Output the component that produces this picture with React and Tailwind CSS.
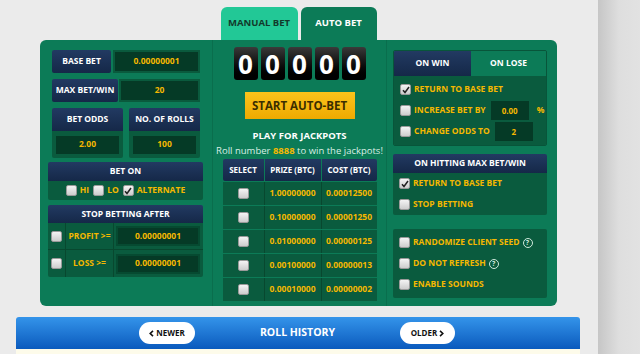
import React from 'react';

const font = { fontFamily: '"Open Sans", "Liberation Sans", sans-serif' };

const Check = ({ checked }) => (
  <span className="inline-flex items-center justify-center w-[11px] h-[11px] rounded-[2px] bg-gradient-to-b from-[#f4f4f4] to-[#cdcdcd] border border-[#9a9a9a] shrink-0">
    {checked && (
      <svg width="8" height="8" viewBox="0 0 8 8">
        <path d="M1 4.2 L3 6.5 L7 1" stroke="#222" strokeWidth="1.5" fill="none" />
      </svg>
    )}
  </span>
);

const Help = () => (
  <span className="inline-flex items-center justify-center w-[10px] h-[10px] rounded-full border border-[#cfe9dc] text-[7px] font-bold text-[#cfe9dc] leading-none ml-[3px]">?</span>
);

const Chevron = ({ dir }) => (
  <svg width="5" height="7" viewBox="0 0 5 7">
    <path d={dir === 'left' ? 'M4 0.8 L1.2 3.5 L4 6.2' : 'M1 0.8 L3.8 3.5 L1 6.2'} stroke="#111" strokeWidth="1.6" fill="none" />
  </svg>
);

const Navy = ({ className = '', children }) => (
  <div className={`bg-gradient-to-b from-[#223a62] to-[#152848] text-white font-bold flex items-center justify-center ${className}`}>
    {children}
  </div>
);

const ValueBox = ({ className = '', children }) => (
  <div className={`bg-[#053a26] border-2 border-[#0a5a3d] text-[#f5b800] font-bold flex items-center justify-center ${className}`}>
    {children}
  </div>
);

const jackpots = [
  ['1.00000000', '0.00012500'],
  ['0.10000000', '0.00001250'],
  ['0.01000000', '0.00000125'],
  ['0.00100000', '0.00000013'],
  ['0.00010000', '0.00000002'],
];

const OptionRow = ({ checked, label, children }) => (
  <div className="flex items-center h-[21px] pl-[6px]">
    <Check checked={checked} />
    <span className="ml-[3px] text-[#f5b800] font-bold text-[8.5px]">{label}</span>
    {children}
  </div>
);

export default function App() {
  return (
    <div style={font} className="w-[640px] h-[354px] bg-[#ebebeb] flex overflow-hidden">
      <div className="w-[598px] flex flex-col">
        {/* tabs */}
        <div className="flex justify-center gap-[3px] pt-[7px] pl-[40px] w-[557px]">
          <div className="w-[77px] h-[33px] rounded-t-md bg-[#22c896] text-[#123a2c] font-bold text-[9.5px] flex items-center justify-center">MANUAL BET</div>
          <div className="w-[76px] h-[33px] rounded-t-md bg-[#0c7b57] text-white font-bold text-[9.5px] flex items-center justify-center">AUTO BET</div>
        </div>

        {/* main panel */}
        <div className="ml-[40px] w-[517px] h-[266px] rounded-md bg-[#0c7b57] flex">
          {/* left column */}
          <div className="w-[172px] pt-[10px] pl-[8px] flex flex-col">
            <div className="flex h-[23px] pl-[4px] gap-[2px]">
              <Navy className="w-[59px] text-[8.5px] rounded-[2px]">BASE BET</Navy>
              <ValueBox className="w-[87px] text-[8.5px]">0.00000001</ValueBox>
            </div>
            <div className="flex h-[23px] pl-[4px] gap-[1px] mt-[6px]">
              <Navy className="w-[66px] text-[8.5px] rounded-[2px]">MAX BET/WIN</Navy>
              <ValueBox className="w-[81px] text-[8.5px]">20</ValueBox>
            </div>
            <div className="flex pl-[4px] gap-[6px] mt-[6px]">
              {[['BET ODDS', '2.00'], ['NO. OF ROLLS', '100']].map(([l, v]) => (
                <div key={l} className="w-[71px] h-[50px] flex flex-col rounded-[2px] overflow-hidden">
                  <Navy className="h-[23px] text-[8.5px]">{l}</Navy>
                  <div className="flex-1 bg-[#0a5b3e] flex items-center justify-center">
                    <div className="w-[63px] h-[18px] bg-[#053a26] text-[#f5b800] font-bold text-[8.5px] flex items-center justify-center">{v}</div>
                  </div>
                </div>
              ))}
            </div>
            <div className="w-[155px] mt-[4px] flex flex-col rounded-[2px] overflow-hidden">
              <Navy className="h-[19px] text-[8.5px]">BET ON</Navy>
              <div className="h-[19px] bg-[#0a5b3e] flex items-center justify-center text-[#f5b800] font-bold text-[8.5px]">
                <Check />
                <span className="ml-[3px] mr-[4px]">HI</span>
                <Check />
                <span className="ml-[3px] mr-[4px]">LO</span>
                <Check checked />
                <span className="ml-[3px]">ALTERNATE</span>
              </div>
            </div>
            <div className="w-[155px] mt-[5px] flex flex-col rounded-[2px] overflow-hidden">
              <Navy className="h-[18px] text-[8.5px]">STOP BETTING AFTER</Navy>
              {['PROFIT >=', 'LOSS >='].map((l, i) => (
                <div key={l} className={`h-[27px] bg-[#0a5b3e] flex ${i === 0 ? 'border-b border-[#08482f]' : ''}`}>
                  <div className="w-[18px] flex items-center justify-center border-r border-[#08482f]">
                    <Check />
                  </div>
                  <div className="w-[48px] flex items-center justify-center text-[#f5b800] font-bold text-[8.5px] border-r border-[#08482f]">{l}</div>
                  <div className="flex items-center pl-[2px]">
                    <ValueBox className="w-[84px] h-[20px] text-[8.5px] border-[#064a31]">0.00000001</ValueBox>
                  </div>
                </div>
              ))}
            </div>
          </div>

          {/* center column */}
          <div className="w-[175px] border-l border-r border-[#0a6e4d] flex flex-col items-center pt-[7px]">
            <div className="flex gap-[3px]">
              {[0, 1, 2, 3, 4].map((i) => (
                <div key={i} className="w-[24px] h-[33px] rounded-[3px] bg-gradient-to-b from-[#3a3a3a] via-[#111] to-[#000] text-white font-bold text-[26px] leading-none flex items-center justify-center">0</div>
              ))}
            </div>
            <div className="mt-[12px] w-[110px] h-[27px] bg-gradient-to-b from-[#fcc41a] to-[#eeaa00] text-[#3b2e00] font-bold text-[11.5px] flex items-center justify-center">START AUTO-BET</div>
            <div className="mt-[12px] text-white font-bold text-[9.5px] leading-none">PLAY FOR JACKPOTS</div>
            <div className="mt-[5px] text-[#d9efe5] text-[9.5px] leading-none whitespace-nowrap">
              Roll number <span className="text-[#f5b800] font-bold">8888</span> to win the jackpots!
            </div>
            <div className="mt-[4px] w-[154px] flex flex-col gap-[1px]">
              <div className="flex h-[22px] gap-[1px] rounded-[2px] overflow-hidden">
                <Navy className="w-[41px] text-[8px]">SELECT</Navy>
                <Navy className="w-[56px] text-[8px]">PRIZE (BTC)</Navy>
                <Navy className="flex-1 text-[8px]">COST (BTC)</Navy>
              </div>
              {jackpots.map(([p, c]) => (
                <div key={p} className="flex h-[23px] gap-[1px] bg-[#08482f]">
                  <div className="w-[41px] bg-[#0a5b3e] flex items-center justify-center">
                    <Check />
                  </div>
                  <div className="w-[56px] bg-[#0a5b3e] flex items-center justify-center text-[#f5b800] font-bold text-[8.5px]">{p}</div>
                  <div className="flex-1 bg-[#0a5b3e] flex items-center justify-center text-[#f5b800] font-bold text-[8.5px]">{c}</div>
                </div>
              ))}
            </div>
          </div>

          {/* right column */}
          <div className="flex-1 pt-[10px] pl-[6px] flex flex-col">
            <div className="w-[154px] flex flex-col rounded-[2px] overflow-hidden border border-[#08553a]">
              <div className="flex h-[25px]">
                <Navy className="w-[77px] text-[8.5px]">ON WIN</Navy>
                <div className="flex-1 bg-[#0c7b57] text-white font-bold text-[8.5px] flex items-center justify-center">ON LOSE</div>
              </div>
              <div className="bg-[#0a5b3e] h-[69px] flex flex-col justify-center">
                <OptionRow checked label="RETURN TO BASE BET" />
                <OptionRow label="INCREASE BET BY">
                  <div className="ml-[5px] w-[38px] h-[19px] bg-[#053a26] text-[#f5b800] font-bold text-[8px] flex items-center justify-center">0.00</div>
                  <span className="ml-[8px] text-[#f5b800] font-bold text-[8.5px]">%</span>
                </OptionRow>
                <OptionRow label="CHANGE ODDS TO">
                  <div className="ml-[5px] w-[38px] h-[19px] bg-[#053a26] text-[#f5b800] font-bold text-[8px] flex items-center justify-center">2</div>
                </OptionRow>
              </div>
            </div>
            <div className="w-[154px] mt-[8px] flex flex-col rounded-[2px] overflow-hidden">
              <Navy className="h-[19px] text-[8.5px]">ON HITTING MAX BET/WIN</Navy>
              <div className="bg-[#0a5b3e] h-[42px] flex flex-col justify-center">
                <OptionRow checked label="RETURN TO BASE BET" />
                <OptionRow label="STOP BETTING" />
              </div>
            </div>
            <div className="w-[154px] mt-[14px] h-[69px] bg-[#0a5b3e] rounded-[2px] flex flex-col justify-center">
              <OptionRow label="RANDOMIZE CLIENT SEED"><Help /></OptionRow>
              <OptionRow label="DO NOT REFRESH"><Help /></OptionRow>
              <OptionRow label="ENABLE SOUNDS" />
            </div>
          </div>
        </div>

        {/* roll history */}
        <div className="ml-[16px] mt-[11px] w-[564px] h-[32px] rounded-t-[3px] bg-gradient-to-b from-[#3494ea] to-[#0a5abd] flex items-center">
          <div className="ml-[123px] w-[56px] h-[22px] rounded-full bg-white text-[#111] font-bold text-[8px] flex items-center justify-center gap-[2px]">
            <Chevron dir="left" />NEWER
          </div>
          <div className="flex-1 text-center text-white font-bold text-[10.5px]">ROLL HISTORY</div>
          <div className="mr-[125px] w-[55px] h-[22px] rounded-full bg-white text-[#111] font-bold text-[8px] flex items-center justify-center gap-[2px]">
            OLDER<Chevron dir="right" />
          </div>
        </div>
        <div className="ml-[16px] w-[564px] flex-1 bg-[#fdfbea]" />
      </div>
      <div className="flex-1 bg-gradient-to-r from-[#c6c6c6] via-[#dedede] to-[#e2e2e2]" />
    </div>
  );
}
